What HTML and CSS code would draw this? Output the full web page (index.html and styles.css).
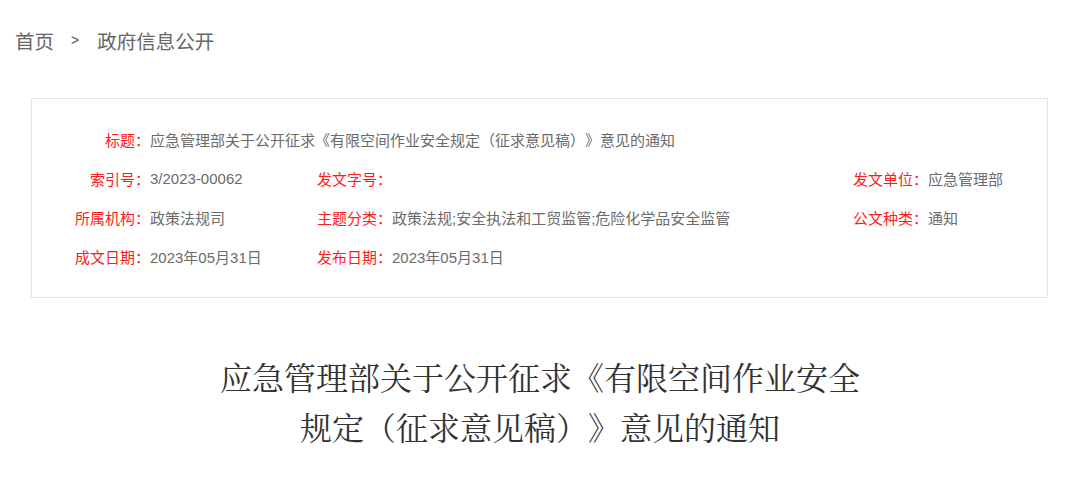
FILE: index.html
```html
<!DOCTYPE html>
<html lang="zh-CN">
<head>
<meta charset="utf-8">
<title>政府信息公开</title>
<link rel="stylesheet" href="styles.css">
</head>
<body>
<nav class="crumb">
  <a class="crumb-link">首页</a>
  <span class="crumb-sep">&gt;</span>
  <a class="crumb-link">政府信息公开</a>
</nav>
<section class="meta">
  <div class="lbl lbl-r">标题：</div>
  <div class="val span-all">应急管理部关于公开征求《有限空间作业安全规定（征求意见稿）》意见的通知</div>

  <div class="lbl lbl-r">索引号：</div>
  <div class="val">3/2023-00062</div>
  <div class="lbl">发文字号：</div>
  <div class="val"></div>
  <div class="lbl">发文单位：</div>
  <div class="val">应急管理部</div>

  <div class="lbl lbl-r">所属机构：</div>
  <div class="val">政策法规司</div>
  <div class="lbl">主题分类：</div>
  <div class="val">政策法规;安全执法和工贸监管;危险化学品安全监管</div>
  <div class="lbl">公文种类：</div>
  <div class="val">通知</div>

  <div class="lbl lbl-r">成文日期：</div>
  <div class="val">2023年05月31日</div>
  <div class="lbl">发布日期：</div>
  <div class="val">2023年05月31日</div>
  <div class="lbl"></div>
  <div class="val"></div>
</section>
<h1 class="doc-title">应急管理部关于公开征求《有限空间作业安全规定（征求意见稿）》意见的通知</h1>
</body>
</html>
```

FILE: styles.css
```css
html, body {
  margin: 0;
  padding: 0;
  background: #ffffff;
}
body {
  font-family: "Liberation Sans", "Noto Sans CJK SC", sans-serif;
  color: #666;
  text-spacing-trim: space-all;
  font-feature-settings: "halt" 0, "chws" 0;
}
.crumb {
  display: flex;
  align-items: center;
  height: 40px;
  padding: 20px 0 0 15px;
  font-size: 19.5px;
  color: #666;
}
.crumb-link {
  color: #666;
}
.crumb-sep {
  font-size: 14px;
  margin: 0 18px 0 17px;
  color: #555;
}
.meta {
  margin: 38px 32px 0 31px;
  border: 1px solid #e6e6e6;
  padding: 21px 0 21px 0;
  display: grid;
  grid-template-columns: 118px 167px 75px 461px 75px 1fr;
  grid-auto-rows: 39px;
  align-items: center;
  font-size: 15px;
}
.lbl {
  color: #ff1a1a;
  white-space: nowrap;
}
.lbl-r {
  text-align: right;
}
.val {
  color: #6b6b6b;
  white-space: nowrap;
}
.span-all {
  grid-column: 2 / -1;
}
.doc-title {
  width: 660px;
  margin: 53px auto 0;
  text-align: center;
  font-family: "Noto Serif CJK SC", "Liberation Serif", "Noto Sans CJK SC", serif;
  font-weight: normal;
  font-size: 32px;
  line-height: 50px;
  color: #333;
}
```
